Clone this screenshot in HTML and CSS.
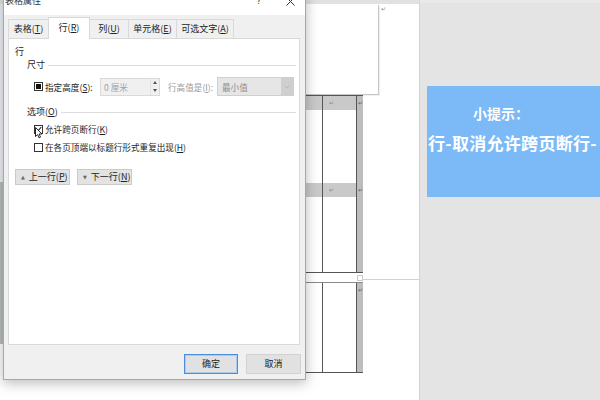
FILE: index.html
```html
<!DOCTYPE html>
<html lang="zh-CN">
<head>
<meta charset="utf-8">
<title>表格属性</title>
<link rel="stylesheet" href="styles.css">
</head>
<body>
<div class="screen">
  <div class="doc">
    <div class="strip"><div class="strip-top"></div><div class="strip-text"></div></div>
    <div class="page">
      <div class="cell-row"><div class="cellbox"></div><span class="pmark">↵</span></div>
      <div class="tbl t1">
        <div class="c a sh"></div><div class="c b sh"><span class="pmark in">↵</span></div><div class="c e"><span class="pmark">↵</span></div>
        <div class="c a"></div><div class="c b"></div><div class="c e"></div>
        <div class="c a sh"></div><div class="c b sh"><span class="pmark in">↵</span></div><div class="c e"><span class="pmark">↵</span></div>
        <div class="c a"></div><div class="c b"></div><div class="c e"></div>
      </div>
      <div class="gap"><span class="gap-box"></span><span class="gap-line"></span></div>
      <div class="tbl t2">
        <div class="c a"></div><div class="c b"></div><div class="c e"><span class="pmark">↵</span></div>
      </div>
    </div>
  </div>
  <div class="side">
    <div class="tip">
      <div class="tip-title">小提示：</div>
      <div class="tip-line">行-取消允许跨页断行-</div>
    </div>
  </div>

  <div class="dialog">
    <div class="titlebar">
      <span class="title">表格属性</span>
      <span class="help">?</span>
      <span class="close"><svg width="9" height="9" viewBox="0 0 9 9"><path d="M0.5 0.5L8.5 8.5M8.5 0.5L0.5 8.5" stroke="#333" stroke-width="1" fill="none"/></svg></span>
    </div>
    <div class="tabs">
      <div class="tab t-1">表格(<u>T</u>)</div>
      <div class="tab t-2 active">行(<u>R</u>)</div>
      <div class="tab t-3">列(<u>U</u>)</div>
      <div class="tab t-4">单元格(<u>E</u>)</div>
      <div class="tab t-5">可选文字(<u>A</u>)</div>
    </div>
    <div class="panel">
      <div class="heading">行</div>
      <div class="legend"><span>尺寸</span><span class="rule"></span></div>
      <div class="size-row">
        <span class="cb"><span class="cb-fill"></span></span>
        <span class="lbl">指定高度(<u>S</u>):</span>
        <div class="spin"><span class="spin-val">0 厘米</span><span class="spin-arrows"><span class="up"></span><span class="down"></span></span></div>
        <span class="lbl2">行高值是(<u>I</u>):</span>
        <div class="select"><span class="sel-val">最小值</span><span class="drop"><svg width="6" height="4" viewBox="0 0 6 4"><path d="M0.5 0.5L3 3L5.5 0.5" stroke="#b8b8b8" fill="none"/></svg></span></div>
      </div>
      <div class="legend opt"><span>选项(<u>O</u>)</span><span class="rule"></span></div>
      <div class="check-row first">
        <span class="cb"><svg width="7" height="7" viewBox="0 0 7 7"><path d="M0.8 3.6L2.6 5.4L6.3 1" stroke="#222" stroke-width="1.1" fill="none"/></svg></span>
        <span class="cb-label">允许跨页断行(<u>K</u>)</span>
      </div>
      <div class="check-row">
        <span class="cb"></span>
        <span class="cb-label">在各页顶端以标题行形式重复出现(<u>H</u>)</span>
      </div>
      <div class="nav">
        <button class="nav-btn"><span class="tri">▲</span>上一行(<u>P</u>)</button>
        <button class="nav-btn"><span class="tri">▼</span>下一行(<u>N</u>)</button>
      </div>
    </div>
    <div class="footer">
      <button class="btn ok">确定</button>
      <button class="btn cancel">取消</button>
    </div>
  </div>

  <svg class="cursor" width="8" height="12" viewBox="0 0 8 12"><path d="M0.5 0.5L0.5 9.5L2.6 7.6L4 10.8L5.5 10.1L4.1 7L6.9 7Z" fill="#fff" stroke="#111" stroke-width="0.9" stroke-linejoin="round"/></svg>
</div>
</body>
</html>
```
FILE: styles.css
```css
* { box-sizing: border-box; margin: 0; padding: 0; }
html, body { width: 600px; height: 400px; overflow: hidden; background: #fff; }
body { font-family: "Noto Sans CJK SC", "Microsoft YaHei", sans-serif; color: #1e1e1e; }

.screen { position: relative; width: 600px; height: 400px; display: flex; overflow: hidden; background: #fff; }

/* document behind */
.doc { width: 420px; display: flex; border-right: 1px solid #d3d3d3; border-top: 4px solid #e1e1e1; background: #fff; }
.strip { width: 3px; display: flex; flex-direction: column; }
.strip-top { height: 178px; background: #eef1f4; }
.strip-text { height: 162px; background: #b8bebe; }
.page { flex: 1; padding: 1px 0 0 247px; display: flex; flex-direction: column; }
.cell-row { display: flex; align-items: flex-start; }
.cellbox { width: 129px; height: 90px; border-right: 1px solid #c6c6c6; border-bottom: 1px solid #c6c6c6; background: #fff; box-shadow: 1px 1px 1px rgba(0,0,0,0.06); }
.pmark { display: block; font-family: "DejaVu Sans", sans-serif; font-size: 6px; line-height: 7px; color: #8a8a8a; margin-left: 2px; }
.pmark.in { margin: 3px 0 0 6px; }

.tbl { display: grid; grid-template-columns: 73px 34px 6px; width: 113px; border-top: 1px solid #555; border-bottom: 1px solid #555; }
.t1 { height: 178px; grid-template-rows: 14px 73px 14px 1fr; }
.t2 { height: 91px; grid-template-rows: 1fr; border-top-color: #8a8a8a; }
.c.a, .c.b { border-right: 1px solid #555; background: #fff; }
.c.sh { background: #c9c9c9; }
.c.e { background: #bdbdbd; }
.c.e .pmark { margin: 3px 0 0 1px; color: #666; }

.gap { height: 9px; display: flex; align-items: flex-start; }
.gap-box { margin: 2px 0 0 107px; width: 6px; height: 6px; border: 1px solid #c8c8c8; background: #fff; }
.gap-line { flex: 1; height: 1px; margin-top: 6px; background: #d2d2d2; }

/* right side */
.side { flex: 1; background: #e4e4e4; border-top: 3px solid #e9e9e9; padding: 83px 0 0 7px; overflow: hidden; }
.tip { width: 200px; height: 111px; background: #7bb9f7; color: #fff; font-weight: bold; overflow: hidden; }
.tip-title { margin-top: 17px; padding-left: 46px; font-size: 14px; line-height: 20px; }
.tip-line { margin-top: 9px; padding-left: 1px; font-size: 17px; line-height: 22px; white-space: nowrap; letter-spacing: 0.3px; }

/* dialog */
.dialog { position: absolute; left: 3px; top: -9px; width: 303px; border: 1px solid #86aedb; background: #f0f0f0; box-shadow: 0 3px 12px rgba(0,0,0,0.28); display: flex; flex-direction: column; font-size: 9px; }
.titlebar { height: 23px; background: #fff; display: flex; align-items: flex-start; padding: 3px 0 0 1px; color: #333; }
.title { font-size: 9px; line-height: 12px; }
.help { margin-left: auto; width: 10px; text-align: center; font-family: "DejaVu Sans", sans-serif; font-size: 9px; line-height: 12px; color: #444; }
.close { width: 10px; margin: 2px 10px 0 21px; display: flex; justify-content: center; }

.tabs { height: 23px; display: flex; align-items: flex-end; padding-left: 4px; }
.tab { height: 19px; border: 1px solid #d9d9d9; border-bottom: none; margin-right: -1px; background: #f0f0f0; line-height: 18px; text-align: center; color: #222; }
.tab.active { height: 22px; margin-bottom: -1px; background: #fff; position: relative; z-index: 1; line-height: 20px; }
.t-1 { width: 41px; }
.t-2 { width: 42px; }
.t-3 { width: 40px; }
.t-4 { width: 49px; }
.t-5 { width: 58px; }

.panel { height: 307px; margin: 0 5px 0 4px; background: #fff; border: 1px solid #d9d9d9; padding: 0 3px 0 6px; display: flex; flex-direction: column; font-size: 8.6px; }
.heading { margin-top: 7px; line-height: 12px; font-size: 9px; }
.legend { margin: 1px 0 0 12px; display: flex; align-items: center; line-height: 12px; font-size: 9px; }
.legend.opt { margin-top: 10px; }
.rule { flex: 1; height: 1px; background: #dcdcdc; margin-left: 3px; }

.size-row { margin: 6px 0 0 19px; height: 19px; display: flex; align-items: center; }
.cb { width: 9px; height: 9px; border: 1px solid #333; background: #fff; display: flex; align-items: center; justify-content: center; flex: none; }
.cb-fill { width: 5px; height: 5px; background: #111; }
.lbl { margin-left: 2px; width: 55px; line-height: 12px; }
.spin { width: 60px; height: 18px; border: 1px solid #d9d9d9; background: #f0f0f0; display: flex; align-items: center; }
.spin-val { padding-left: 3px; color: #a2a2a2; line-height: 12px; }
.spin-arrows { margin-left: auto; width: 9px; height: 16px; display: flex; flex-direction: column; justify-content: space-around; align-items: center; border-left: 1px solid #e2e2e2; }
.up { width: 0; height: 0; border-left: 2px solid transparent; border-right: 2px solid transparent; border-bottom: 3px solid #555; }
.down { width: 0; height: 0; border-left: 2px solid transparent; border-right: 2px solid transparent; border-top: 3px solid #555; }
.lbl2 { margin-left: 8px; width: 49px; color: #9a9a9a; line-height: 12px; }
.select { width: 77px; height: 19px; background: #e6e6e6; border: 1px solid #cfcfcf; display: flex; align-items: center; }
.sel-val { padding-left: 4px; color: #8e8e8e; line-height: 12px; }
.drop { margin-left: auto; width: 12px; height: 17px; background: #cfcfcf; display: flex; align-items: center; justify-content: center; }

.check-row { margin: 6px 0 0 19px; height: 12px; display: flex; align-items: center; }
.check-row.first { margin-top: 5px; }
.cb-label { margin-left: 2px; line-height: 12px; }

.nav { margin-top: 16px; display: flex; gap: 7px; }
.nav-btn { width: 55px; height: 16px; background: #e3e3e3; border: 1px solid #cacaca; font-family: inherit; font-size: 9px; color: #222; display: flex; align-items: center; padding-left: 5px; line-height: 12px; }
.tri { font-size: 5px; color: #666; margin-right: 4px; font-family: "DejaVu Sans", sans-serif; }

.footer { height: 34px; display: flex; justify-content: flex-end; align-items: flex-start; gap: 8px; padding: 9px 4px 0 0; }
.btn { height: 20px; background: #e1e1e1; font-family: inherit; font-size: 9px; color: #222; line-height: 12px; }
.ok { width: 54px; border: 1px solid #4a90d9; box-shadow: inset 0 0 0 1px #a9cdf0; }
.cancel { width: 55px; border: 1px solid #d2d2d2; }

.cursor { position: absolute; left: 35px; top: 127px; }
```
